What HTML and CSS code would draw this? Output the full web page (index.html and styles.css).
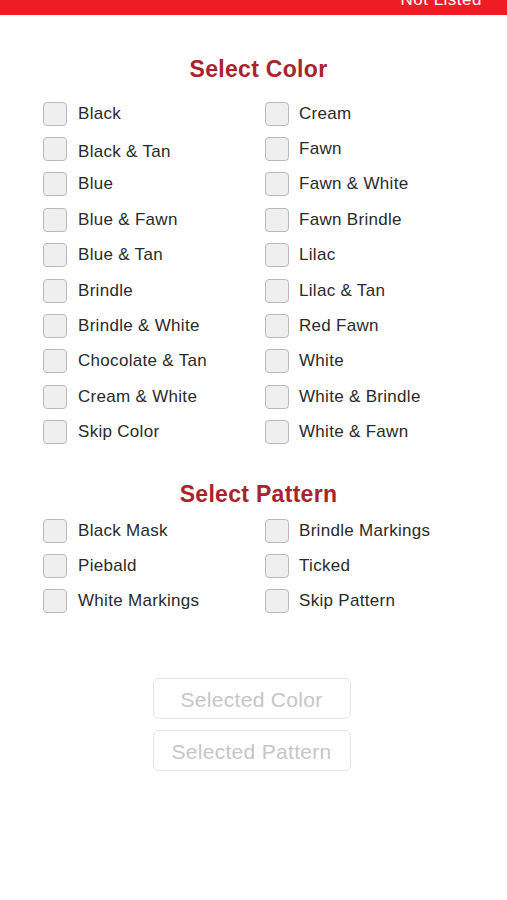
FILE: index.html
```html
<!DOCTYPE html>
<html lang="en">
<head>
<meta charset="utf-8">
<title>Select Color</title>
<link rel="stylesheet" href="styles.css">
</head>
<body>
<header class="topbar"><span class="topbar-link">Not Listed</span></header>
<main class="content">
  <h2 class="title title-color">Select Color</h2>
  <div class="options options-color">
    <label class="opt"><span class="box"></span><span class="lbl">Black</span></label>
    <label class="opt"><span class="box"></span><span class="lbl">Cream</span></label>
    <label class="opt"><span class="box"></span><span class="lbl lbl-low">Black &amp; Tan</span></label>
    <label class="opt"><span class="box"></span><span class="lbl">Fawn</span></label>
    <label class="opt"><span class="box"></span><span class="lbl">Blue</span></label>
    <label class="opt"><span class="box"></span><span class="lbl">Fawn &amp; White</span></label>
    <label class="opt"><span class="box"></span><span class="lbl">Blue &amp; Fawn</span></label>
    <label class="opt"><span class="box"></span><span class="lbl">Fawn Brindle</span></label>
    <label class="opt"><span class="box"></span><span class="lbl">Blue &amp; Tan</span></label>
    <label class="opt"><span class="box"></span><span class="lbl">Lilac</span></label>
    <label class="opt"><span class="box"></span><span class="lbl">Brindle</span></label>
    <label class="opt"><span class="box"></span><span class="lbl">Lilac &amp; Tan</span></label>
    <label class="opt"><span class="box"></span><span class="lbl">Brindle &amp; White</span></label>
    <label class="opt"><span class="box"></span><span class="lbl">Red Fawn</span></label>
    <label class="opt"><span class="box"></span><span class="lbl">Chocolate &amp; Tan</span></label>
    <label class="opt"><span class="box"></span><span class="lbl">White</span></label>
    <label class="opt"><span class="box"></span><span class="lbl">Cream &amp; White</span></label>
    <label class="opt"><span class="box"></span><span class="lbl">White &amp; Brindle</span></label>
    <label class="opt"><span class="box"></span><span class="lbl">Skip Color</span></label>
    <label class="opt"><span class="box"></span><span class="lbl">White &amp; Fawn</span></label>
  </div>

  <h2 class="title title-pattern">Select Pattern</h2>
  <div class="options options-pattern">
    <label class="opt"><span class="box"></span><span class="lbl">Black Mask</span></label>
    <label class="opt"><span class="box"></span><span class="lbl">Brindle Markings</span></label>
    <label class="opt"><span class="box"></span><span class="lbl">Piebald</span></label>
    <label class="opt"><span class="box"></span><span class="lbl">Ticked</span></label>
    <label class="opt"><span class="box"></span><span class="lbl">White Markings</span></label>
    <label class="opt"><span class="box"></span><span class="lbl">Skip Pattern</span></label>
  </div>

  <div class="actions">
    <button class="btn" disabled>Selected Color</button>
    <button class="btn" disabled>Selected Pattern</button>
  </div>
</main>
</body>
</html>
```

FILE: styles.css
```css
* { box-sizing: border-box; }

html, body {
  margin: 0;
  padding: 0;
  background: #ffffff;
  font-family: "Liberation Sans", Arial, sans-serif;
}

.topbar {
  height: 15px;
  background: #ee1c25;
  overflow: hidden;
  display: flex;
  justify-content: flex-end;
  align-items: flex-end;
  padding: 0 25px 5px 0;
}

.topbar-link {
  color: #ffffff;
  font-size: 17px;
  line-height: 20px;
  letter-spacing: 0.5px;
  flex: none;
}

.content {
  padding-top: 41px;
}

.title {
  margin: 0;
  text-align: center;
  padding-left: 10px;
  font-size: 23px;
  line-height: 26px;
  font-weight: bold;
  letter-spacing: 0.3px;
  color: #a8232b;
}

.title-color { margin-bottom: 14px; }
.title-pattern { margin-top: 31px; margin-bottom: 6px; }

.options {
  display: grid;
  grid-template-columns: 222px 1fr;
  grid-auto-rows: 35.4px;
  padding-left: 43px;
}

.opt {
  display: flex;
  align-items: center;
  gap: 11px;
}

.options .opt:nth-child(even) { gap: 10px; }

.box {
  flex: none;
  width: 24px;
  height: 24px;
  border: 1.5px solid #b9b9b9;
  border-radius: 4px;
  background: #efefef;
}

.lbl {
  font-size: 17px;
  line-height: 20px;
  letter-spacing: 0.3px;
  color: #2a2a2a;
}

.lbl-low { padding-top: 6px; }

.actions {
  margin-top: 59px;
  display: flex;
  flex-direction: column;
  align-items: center;
  gap: 11px;
  padding-right: 4px;
}

.btn {
  width: 198px;
  height: 41px;
  border: 1px solid #e4e4e4;
  border-radius: 6px;
  background: #ffffff;
  color: #c6c6c6;
  font-family: "Liberation Sans", Arial, sans-serif;
  font-size: 21px;
  letter-spacing: 0.3px;
  padding: 2px 0 0;
}
```
